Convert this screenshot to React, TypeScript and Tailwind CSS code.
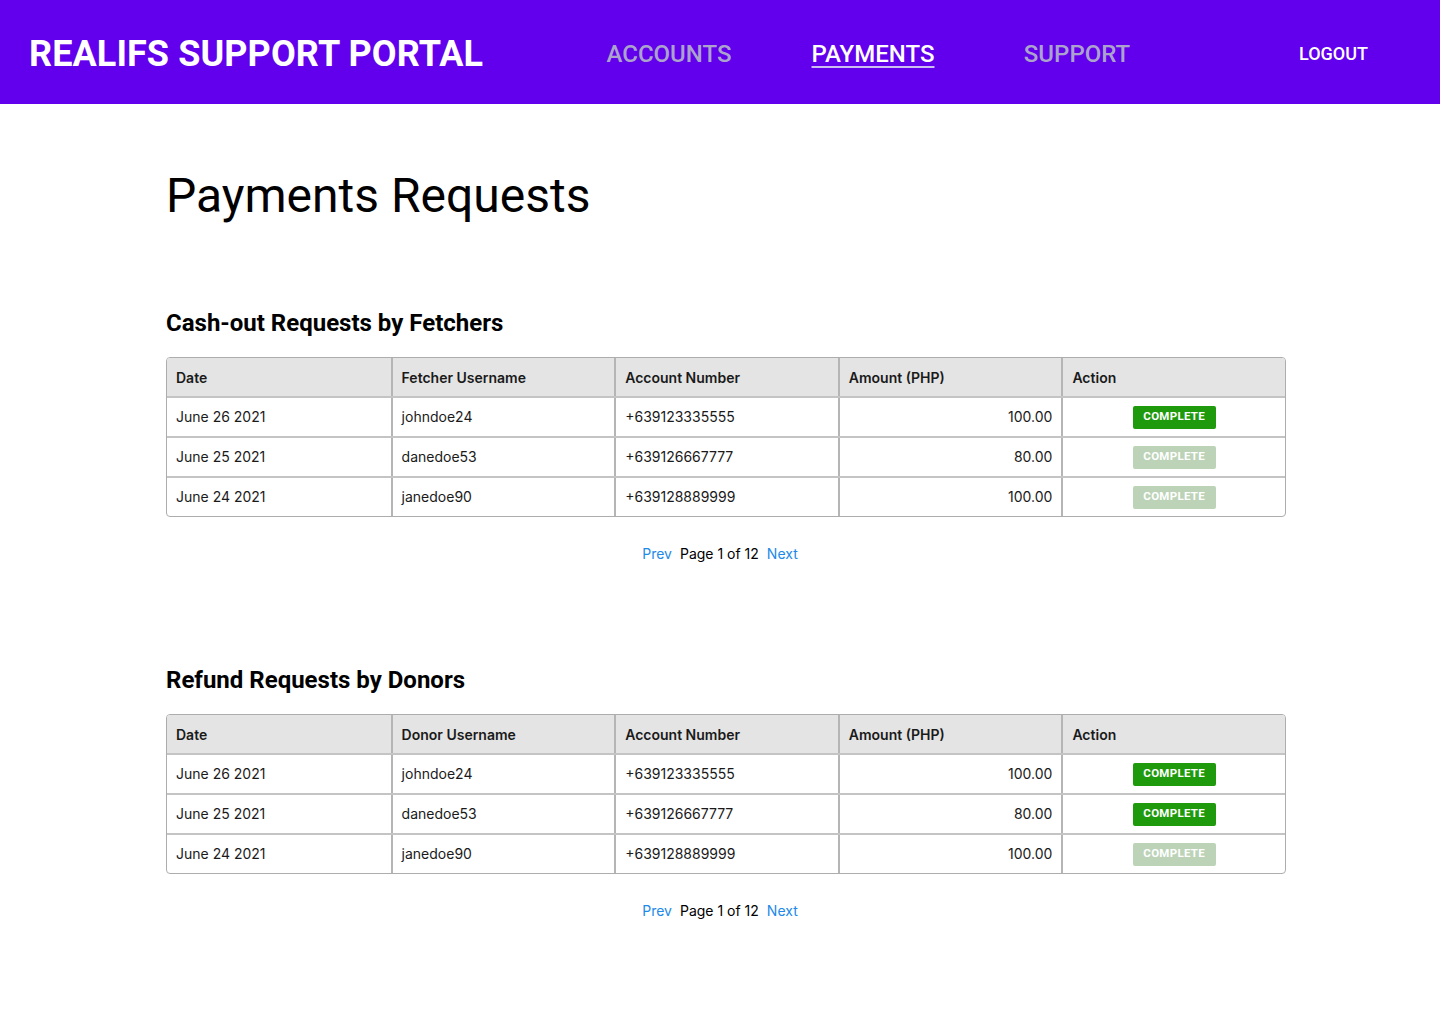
import React from 'react'

type Row = {
  date: string
  user: string
  account: string
  amount: string
  active: boolean
}

const cashouts: Row[] = [
  { date: 'June 26 2021', user: 'johndoe24', account: '+639123335555', amount: '100.00', active: true },
  { date: 'June 25 2021', user: 'danedoe53', account: '+639126667777', amount: '80.00', active: false },
  { date: 'June 24 2021', user: 'janedoe90', account: '+639128889999', amount: '100.00', active: false },
]

const refunds: Row[] = [
  { date: 'June 26 2021', user: 'johndoe24', account: '+639123335555', amount: '100.00', active: true },
  { date: 'June 25 2021', user: 'danedoe53', account: '+639126667777', amount: '80.00', active: true },
  { date: 'June 24 2021', user: 'janedoe90', account: '+639128889999', amount: '100.00', active: false },
]

function RequestsTable({ title, userLabel, rows }: { title: string; userLabel: string; rows: Row[] }) {
  return (
    <section>
      <h2 className="font-['Roboto'] font-bold text-[24px] leading-[32px] text-black">{title}</h2>

      <div className="mt-[18px] w-[1120px] border border-[#adadad] rounded-[4px] overflow-hidden font-['Inter'] text-[14px] text-[#1a1a1a]">
        <div className="grid grid-cols-5 h-[38px] bg-[#e4e4e4] font-semibold">
          {['Date', userLabel, 'Account Number', 'Amount (PHP)', 'Action'].map((h, i) => (
            <div key={h} className={`flex items-center px-[9px] ${i > 0 ? 'border-l-2 border-[#b5b5b5]' : ''}`}>
              {h}
            </div>
          ))}
        </div>
        {rows.map((r) => (
          <div key={r.date} className="grid grid-cols-5 h-[40px] border-t-2 border-[#c4c4c4]">
            <div className="flex items-center px-[9px] pb-[2px]">{r.date}</div>
            <div className="flex items-center px-[9px] pb-[2px] border-l-2 border-[#b5b5b5]">{r.user}</div>
            <div className="flex items-center px-[9px] pb-[2px] border-l-2 border-[#b5b5b5]">{r.account}</div>
            <div className="flex items-center justify-end px-[9px] pb-[2px] border-l-2 border-[#b5b5b5]">{r.amount}</div>
            <div className="flex items-center justify-center border-l-2 border-[#b5b5b5]">
              <button
                className={`w-[83px] h-[23px] rounded-[2px] font-['Roboto'] font-bold text-[11.5px] tracking-[0.3px] text-white ${
                  r.active ? 'bg-[#1f9a0c]' : 'bg-[#bcd3b8]'
                }`}
              >
                COMPLETE
              </button>
            </div>
          </div>
        ))}
      </div>

      <div className="mt-[27px] w-[1120px] pr-[12px] flex justify-center gap-[8px] font-['Inter'] text-[14px] leading-[20px]">
        <a className="text-[#2189e8] cursor-pointer">Prev</a>
        <span className="text-black">Page 1 of 12</span>
        <a className="text-[#2189e8] cursor-pointer">Next</a>
      </div>
    </section>
  )
}

export default function App() {
  return (
    <div className="min-h-screen bg-white">
      {/* Top bar */}
      <header className="h-[104px] bg-[#6200ee] flex items-center pt-[3px] pl-[29px] pr-[72px] font-['Roboto']">
        <div className="w-[538px] text-white font-bold text-[36px] tracking-[0.1px] leading-none">REALIFS SUPPORT PORTAL</div>
        <nav className="flex text-[24px] font-medium">
          <a className="w-[204px] text-center text-[#aba3cb]">ACCOUNTS</a>
          <a className="w-[204px] text-center text-white underline decoration-2 underline-offset-[4px] decoration-[#cbbdf0]">
            PAYMENTS
          </a>
          <a className="w-[204px] text-center text-[#aba3cb]">SUPPORT</a>
        </nav>
        <a className="ml-auto text-white font-medium text-[18px]">LOGOUT</a>
      </header>

      {/* Main */}
      <main className="pl-[166px] pb-[100px]">
        <h1 className="mt-[64px] font-['Roboto'] text-[48px] leading-[56px] text-black">Payments Requests</h1>

        <div className="mt-[83px]">
          <RequestsTable title="Cash-out Requests by Fetchers" userLabel="Fetcher Username" rows={cashouts} />
        </div>
        <div className="mt-[100px]">
          <RequestsTable title="Refund Requests by Donors" userLabel="Donor Username" rows={refunds} />
        </div>
      </main>
    </div>
  )
}
